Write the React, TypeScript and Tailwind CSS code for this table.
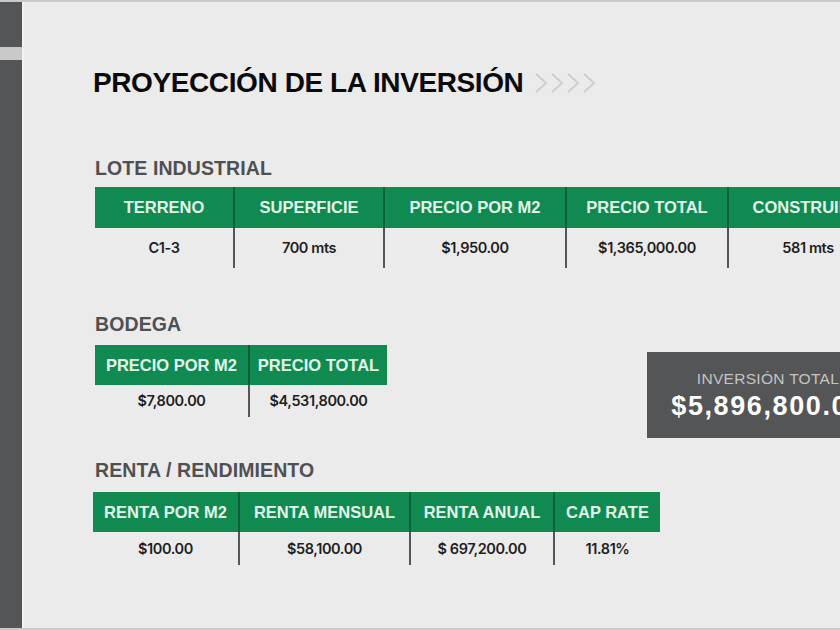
import React from 'react';

type Col = { label: string; value: string; w: number };

const lote: Col[] = [
  { label: 'TERRENO', value: 'C1-3', w: 138 },
  { label: 'SUPERFICIE', value: '700 mts', w: 150 },
  { label: 'PRECIO POR M2', value: '$1,950.00', w: 182 },
  { label: 'PRECIO TOTAL', value: '$1,365,000.00', w: 162 },
  { label: 'CONSTRUIDO', value: '581 mts', w: 160 },
];

const bodega: Col[] = [
  { label: 'PRECIO POR M2', value: '$7,800.00', w: 153 },
  { label: 'PRECIO TOTAL', value: '$4,531,800.00', w: 139 },
];

const renta: Col[] = [
  { label: 'RENTA POR M2', value: '$100.00', w: 145 },
  { label: 'RENTA MENSUAL', value: '$58,100.00', w: 171 },
  { label: 'RENTA ANUAL', value: '$ 697,200.00', w: 144 },
  { label: 'CAP RATE', value: '11.81%', w: 107 },
];

function DataTable({ cols, headH, bodyH }: { cols: Col[]; headH: number; bodyH: number }) {
  return (
    <div className="flex shrink-0">
      {cols.map((c, i) => (
        <div key={c.label} className="flex flex-col shrink-0" style={{ width: c.w }}>
          <div
            className={`flex items-center justify-center bg-[#108a50] text-[16.5px] font-bold tracking-[0px] text-[#e2f6ea] whitespace-nowrap ${
              i > 0 ? 'border-l-2 border-[#0b5e37]' : ''
            }`}
            style={{ height: headH }}
          >
            {c.label}
          </div>
          <div
            className={`flex items-center justify-center font-['Inter',sans-serif] text-[14.5px] font-semibold tracking-[-0.4px] text-[#1e1e1e] whitespace-nowrap ${
              i > 0 ? 'border-l-2 border-[#555658]' : ''
            }`}
            style={{ height: bodyH }}
          >
            {c.value}
          </div>
        </div>
      ))}
    </div>
  );
}

function SectionLabel({ children }: { children: React.ReactNode }) {
  return (
    <h2 className="h-[30px] text-[19.5px] font-bold leading-[30px] tracking-[0.1px] text-[#4f5052] whitespace-nowrap">
      {children}
    </h2>
  );
}

export default function App() {
  return (
    <div
      className="flex h-[630px] w-[840px] overflow-hidden border-t-2 border-b-2 border-[#c9c9c9] bg-[#ebebeb]"
      style={{ fontFamily: '"Liberation Sans", Arial, sans-serif' }}
    >
      {/* sidebar */}
      <div className="flex w-[22px] shrink-0 flex-col bg-[#545557]">
        <div className="h-[45px]" />
        <div className="h-[13px] bg-[#c8c8c8]" />
      </div>
      <div className="w-[2px] shrink-0 bg-[#f2f2f2]" />

      {/* main */}
      <div className="flex min-w-0 flex-1 flex-col pl-[69px] pt-[62px]">
        <div className="flex h-[38px] items-center">
          <h1 className="text-[28px] font-bold leading-[38px] tracking-[-0.4px] text-[#0a0a0a] whitespace-nowrap">
            PROYECCIÓN DE LA INVERSIÓN
          </h1>
          <svg className="ml-[11px]" width="66" height="24" viewBox="0 0 66 24" fill="none">
            {[0, 16, 32, 48].map((x) => (
              <path key={x} d={`M${x + 2} 3 L${x + 12} 12 L${x + 2} 21`} stroke="#cfcfcf" strokeWidth="2.2" />
            ))}
          </svg>
        </div>

        <div className="mt-[51px] pl-[2px]">
          <SectionLabel>LOTE INDUSTRIAL</SectionLabel>
          <div className="mt-[4px]">
            <DataTable cols={lote} headH={41} bodyH={40} />
          </div>
        </div>

        <div className="mt-[41px] flex pl-[2px]">
          <div className="flex flex-col">
            <SectionLabel>BODEGA</SectionLabel>
            <div className="mt-[6px]">
              <DataTable cols={bodega} headH={40} bodyH={32} />
            </div>
          </div>
          <div className="ml-[260px] mt-[43px] flex h-[86px] w-[242px] shrink-0 flex-col items-center justify-center bg-[#545557]">
            <div className="text-[15.5px] leading-[22px] tracking-[0.3px] text-[#c4c4c4] whitespace-nowrap">
              INVERSIÓN TOTAL
            </div>
            <div className="text-[27px] font-bold leading-[32px] tracking-[1.6px] text-white whitespace-nowrap">
              $5,896,800.00
            </div>
          </div>
        </div>

        <div className="mt-[17px]">
          <div className="pl-[2px]">
            <SectionLabel>RENTA / RENDIMIENTO</SectionLabel>
          </div>
          <div className="mt-[7px]">
            <DataTable cols={renta} headH={40} bodyH={33} />
          </div>
        </div>
      </div>
    </div>
  );
}
